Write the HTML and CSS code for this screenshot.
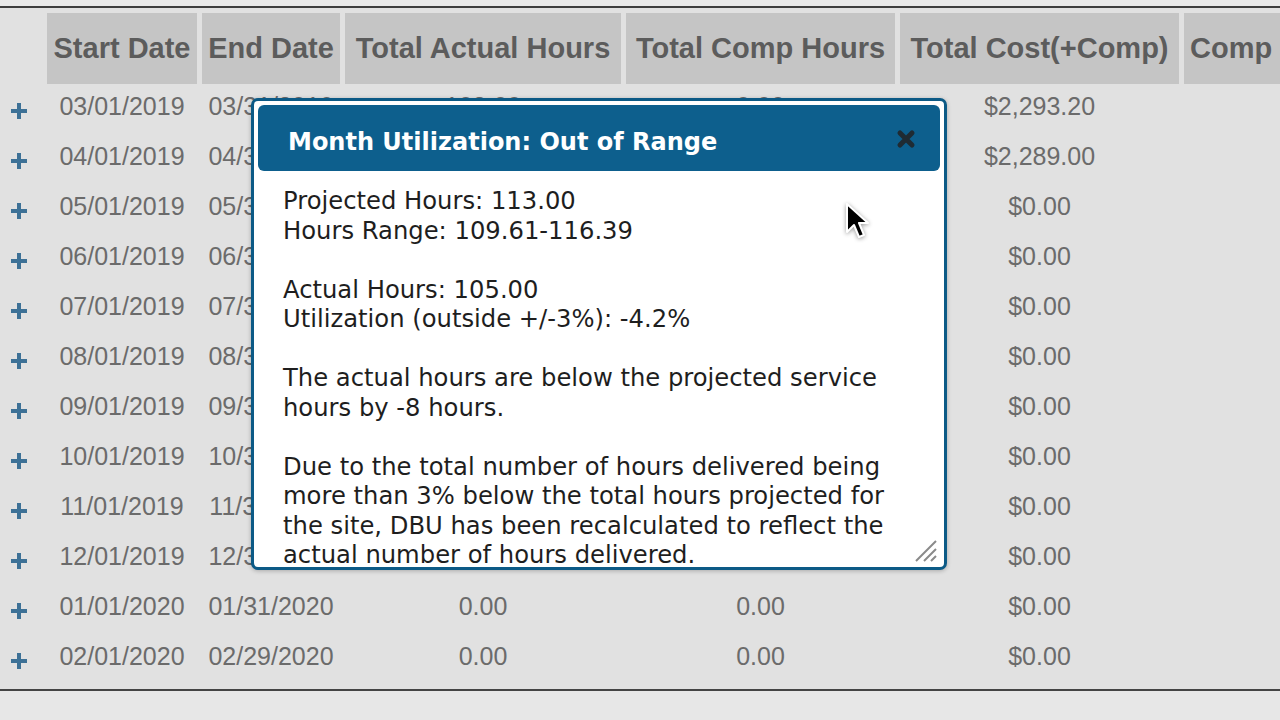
FILE: index.html
```html
<!DOCTYPE html>
<html lang="en">
<head>
    <meta charset="UTF-8">
    <meta name="viewport" content="width=device-width, initial-scale=1.0">
    <title>Monthly Utilization</title>
    <link rel="stylesheet" href="styles.css">
</head>
<body>
    <div class="screen">
        <div class="top-rule"></div>

        <!-- Month table -->
        <div class="month-table">
            <div class="row head">
                <div class="cell blank"></div>
                <div class="cell">Start Date</div>
                <div class="cell">End Date</div>
                <div class="cell">Total Actual Hours</div>
                <div class="cell">Total Comp Hours</div>
                <div class="cell">Total Cost(+Comp)</div>
                <div class="cell left">Comp Cost</div>
            </div>
            <div class="row">
                <div class="cell"><span class="plus"></span></div>
                <div class="cell">03/01/2019</div><div class="cell">03/31/2019</div>
                <div class="cell">108.00</div><div class="cell">0.00</div>
                <div class="cell">$2,293.20</div><div class="cell"></div>
            </div>
            <div class="row">
                <div class="cell"><span class="plus"></span></div>
                <div class="cell">04/01/2019</div><div class="cell">04/30/2019</div>
                <div class="cell">105.00</div><div class="cell">0.00</div>
                <div class="cell">$2,289.00</div><div class="cell"></div>
            </div>
            <div class="row">
                <div class="cell"><span class="plus"></span></div>
                <div class="cell">05/01/2019</div><div class="cell">05/31/2019</div>
                <div class="cell">0.00</div><div class="cell">0.00</div>
                <div class="cell">$0.00</div><div class="cell"></div>
            </div>
            <div class="row">
                <div class="cell"><span class="plus"></span></div>
                <div class="cell">06/01/2019</div><div class="cell">06/30/2019</div>
                <div class="cell">0.00</div><div class="cell">0.00</div>
                <div class="cell">$0.00</div><div class="cell"></div>
            </div>
            <div class="row">
                <div class="cell"><span class="plus"></span></div>
                <div class="cell">07/01/2019</div><div class="cell">07/31/2019</div>
                <div class="cell">0.00</div><div class="cell">0.00</div>
                <div class="cell">$0.00</div><div class="cell"></div>
            </div>
            <div class="row">
                <div class="cell"><span class="plus"></span></div>
                <div class="cell">08/01/2019</div><div class="cell">08/31/2019</div>
                <div class="cell">0.00</div><div class="cell">0.00</div>
                <div class="cell">$0.00</div><div class="cell"></div>
            </div>
            <div class="row">
                <div class="cell"><span class="plus"></span></div>
                <div class="cell">09/01/2019</div><div class="cell">09/30/2019</div>
                <div class="cell">0.00</div><div class="cell">0.00</div>
                <div class="cell">$0.00</div><div class="cell"></div>
            </div>
            <div class="row">
                <div class="cell"><span class="plus"></span></div>
                <div class="cell">10/01/2019</div><div class="cell">10/31/2019</div>
                <div class="cell">0.00</div><div class="cell">0.00</div>
                <div class="cell">$0.00</div><div class="cell"></div>
            </div>
            <div class="row">
                <div class="cell"><span class="plus"></span></div>
                <div class="cell">11/01/2019</div><div class="cell">11/30/2019</div>
                <div class="cell">0.00</div><div class="cell">0.00</div>
                <div class="cell">$0.00</div><div class="cell"></div>
            </div>
            <div class="row">
                <div class="cell"><span class="plus"></span></div>
                <div class="cell">12/01/2019</div><div class="cell">12/31/2019</div>
                <div class="cell">0.00</div><div class="cell">0.00</div>
                <div class="cell">$0.00</div><div class="cell"></div>
            </div>
            <div class="row">
                <div class="cell"><span class="plus"></span></div>
                <div class="cell">01/01/2020</div><div class="cell">01/31/2020</div>
                <div class="cell">0.00</div><div class="cell">0.00</div>
                <div class="cell">$0.00</div><div class="cell"></div>
            </div>
            <div class="row">
                <div class="cell"><span class="plus"></span></div>
                <div class="cell">02/01/2020</div><div class="cell">02/29/2020</div>
                <div class="cell">0.00</div><div class="cell">0.00</div>
                <div class="cell">$0.00</div><div class="cell"></div>
            </div>
        </div>

        <div class="bottom-rule"></div>

        <!-- Utilization popup -->
        <div class="dialog">
            <div class="dialog-title">
                <span>Month Utilization: Out of Range</span>
                <svg class="close" width="20" height="20" viewBox="0 0 20 20">
                    <path d="M4 4 L16 16 M16 4 L4 16" stroke="#1f2b33" stroke-width="5" stroke-linecap="round"/>
                </svg>
            </div>
            <div class="dialog-body">
                <p>Projected Hours: 113.00<br>Hours Range: 109.61-116.39</p>
                <p>Actual Hours: 105.00<br>Utilization (outside +/-3%): -4.2%</p>
                <p>The actual hours are below the projected service hours by -8 hours.</p>
                <p>Due to the total number of hours delivered being more than 3% below the total hours projected for the site, DBU has been recalculated to reflect the actual number of hours delivered.</p>
            </div>
            <svg class="grip" width="26" height="26" viewBox="0 0 26 26">
                <path d="M24 4 L4 24 M24 12 L12 24 M24 19 L19 24" stroke="#8a8a8a" stroke-width="2"/>
            </svg>
        </div>

        <svg class="pointer" width="26" height="40" viewBox="0 0 26 40">
            <path d="M2 2 L2 30 L9 23 L14 35 L19 33 L14 21 L23 21 Z" fill="#000" stroke="#fff" stroke-width="2" stroke-linejoin="round"/>
        </svg>
    </div>
</body>
</html>
```

FILE: styles.css
```css
*{
    box-sizing: border-box;
}
body{
    margin: 0;
    background-color: #e1e1e1;
    font-family: "Liberation Sans", Arial, sans-serif;
}
.screen{
    position: relative;
    width: 1280px;
    height: 720px;
    overflow: hidden;
    background-color: #e1e1e1;
}
.top-rule{
    height: 8px;
    background-color: #e9e9e9;
    border-bottom: 2px solid #3e3e3e;
}
.month-table{
    padding-top: 5px;
}
.row{
    display: grid;
    grid-template-columns: 42px 150px 138px 276px 269px 279px 200px;
    column-gap: 5px;
    width: 1400px;
}
.cell{
    display: flex;
    align-items: center;
    justify-content: center;
    white-space: nowrap;
}
.head .cell{
    height: 71px;
    background-color: #c5c5c5;
    color: #5c5c5c;
    font-size: 29px;
    font-weight: bold;
}
.head .cell.blank{
    background-color: transparent;
}
.head .cell.left{
    justify-content: flex-start;
    padding-left: 6px;
}
.row:not(.head) .cell{
    height: 50px;
    padding-bottom: 6px;
    color: #6b6b6b;
    font-size: 25px;
}
.plus{
    position: relative;
    width: 16px;
    height: 16px;
    margin-top: 9px;
    margin-left: -4px;
}
.plus::before,
.plus::after{
    content: "";
    position: absolute;
    background-color: #3d7196;
}
.plus::before{
    left: 0;
    top: 6px;
    width: 16px;
    height: 4px;
}
.plus::after{
    left: 6px;
    top: 0;
    width: 4px;
    height: 16px;
}
.bottom-rule{
    margin-top: 5px;
    height: 2px;
    background-color: #444;
}
.screen::after{
    content: "";
    position: absolute;
    left: 0;
    right: 0;
    top: 691px;
    bottom: 0;
    background-color: #e7e7e7;
}

/* popup */
.dialog{
    position: absolute;
    left: 251px;
    top: 98px;
    width: 696px;
    height: 472px;
    padding: 4px;
    background-color: #fff;
    border: 3px solid #0c5a86;
    border-radius: 7px;
    box-shadow: 0 1px 4px rgba(0, 0, 0, 0.25);
    display: flex;
    flex-direction: column;
    z-index: 2;
}
.dialog-title{
    height: 66px;
    flex-shrink: 0;
    display: flex;
    align-items: center;
    justify-content: space-between;
    padding: 8px 24px 0 30px;
    background-color: #0d5f8d;
    border-radius: 6px;
    color: #fff;
    font-family: "DejaVu Sans", Verdana, sans-serif;
    font-size: 24px;
    font-weight: bold;
}
.close{
    margin-top: -6px;
}
.dialog-body{
    flex: 1;
    overflow: hidden;
    padding: 15px 30px 0 25px;
    color: #1e1e1e;
    font-family: "DejaVu Sans", Verdana, sans-serif;
    font-size: 24.25px;
    line-height: 29.5px;
}
.dialog-body p{
    margin: 0 0 29.5px;
}
.grip{
    position: absolute;
    right: 6px;
    bottom: 4px;
}
.pointer{
    position: absolute;
    left: 845px;
    top: 202px;
    z-index: 3;
    filter: drop-shadow(0 1px 2px rgba(0, 0, 0, 0.4));
}
```
